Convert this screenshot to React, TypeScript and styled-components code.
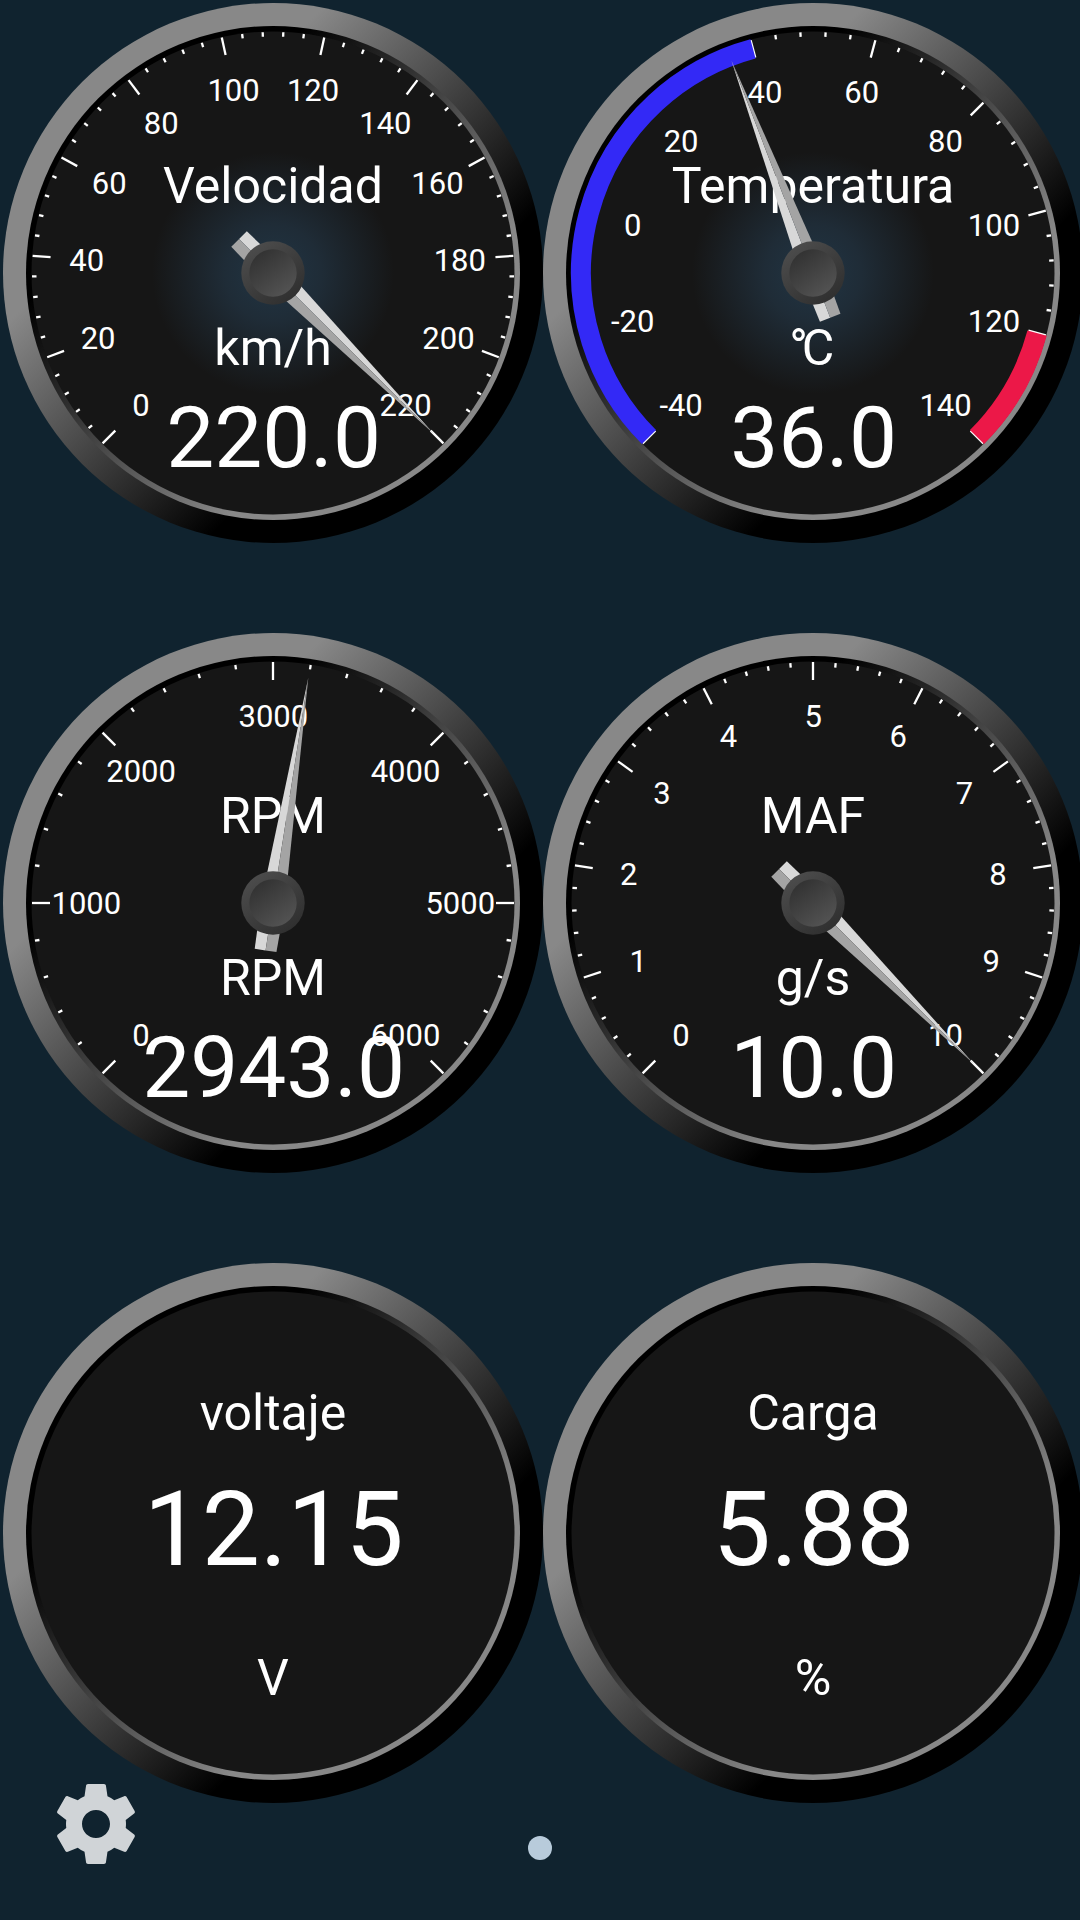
import React from "react";
import styled, { createGlobalStyle } from "styled-components";

const GlobalStyle = createGlobalStyle`
  body {
    margin: 0;
    background: #10232f;
    overflow: hidden;
  }
`;

const Screen = styled.main`
  position: relative;
  box-sizing: border-box;
  width: 1080px;
  height: 1920px;
  padding: 3px 0 0 3px;
  overflow: hidden;
  background: #10232f;
  font-family: Roboto, "Noto Sans", sans-serif;
`;

const GaugeGrid = styled.section`
  display: grid;
  grid-template-columns: repeat(2, 540px);
  grid-auto-rows: 540px;
  row-gap: 90px;
`;

const Dial = styled.svg`
  display: block;
  width: 540px;
  height: 540px;
`;

const DialText = styled.text<{ $size: number; $tracking?: number }>`
  fill: #fff;
  font-family: Roboto, "Noto Sans", sans-serif;
  font-size: ${(p) => p.$size}px;
  letter-spacing: ${(p) => p.$tracking ?? 0}px;
  text-anchor: middle;
`;

const SettingsButton = styled.button`
  position: absolute;
  left: 48px;
  top: 1776px;
  width: 96px;
  height: 96px;
  padding: 0;
  border: 0;
  background: none;
  color: #d0d4d7;

  svg {
    display: block;
    width: 96px;
    height: 96px;
  }
`;

const PageDot = styled.span`
  position: absolute;
  left: 528px;
  top: 1836px;
  width: 24px;
  height: 24px;
  border-radius: 50%;
  background: #b8cbdb;
`;

type Band = { from: number; to: number; color: string };

type Scale = {
  min: number;
  max: number;
  step: number;
  needle: number;
  glow?: boolean;
  bands?: Band[];
};

type GaugeData = {
  title: string;
  unit: string;
  unitTracking?: number;
  value: string;
  scale?: Scale;
};

const GAUGES: GaugeData[] = [
  {
    title: "Velocidad",
    unit: "km/h",
    value: "220.0",
    scale: { min: 0, max: 220, step: 20, needle: 220, glow: true },
  },
  {
    title: "Temperatura",
    unit: "°C",
    unitTracking: -6,
    value: "36.0",
    scale: {
      min: -40,
      max: 140,
      step: 20,
      needle: 36,
      glow: true,
      bands: [
        { from: -40, to: 40, color: "#3329f6" },
        { from: 120, to: 140, color: "#ec1848" },
      ],
    },
  },
  {
    title: "RPM",
    unit: "RPM",
    value: "2943.0",
    scale: { min: 0, max: 6000, step: 1000, needle: 3198 },
  },
  {
    title: "MAF",
    unit: "g/s",
    value: "10.0",
    scale: { min: 0, max: 10, step: 1, needle: 10 },
  },
  { title: "voltaje", unit: "V", value: "12.15" },
  { title: "Carga", unit: "%", value: "5.88" },
];

const SUBDIVISIONS = 5;
const TICK_OUTER = 241;
const LABEL_RADIUS = 187;

const angleOf = (v: number, s: Scale) =>
  -135 + ((v - s.min) / (s.max - s.min)) * 270;

const polar = (deg: number, r: number): [number, number] => {
  const a = (deg * Math.PI) / 180;
  return [Math.sin(a) * r, -Math.cos(a) * r];
};

function Bezel() {
  return (
    <>
      <circle r="270" fill="url(#rimOuter)" />
      <circle r="247" fill="url(#rimInner)" />
      <circle r="241.5" fill="#161616" />
    </>
  );
}

function Ticks({ scale }: { scale: Scale }) {
  const majors = Math.round((scale.max - scale.min) / scale.step);
  const total = majors * SUBDIVISIONS;
  return (
    <g stroke="#fff">
      {Array.from({ length: total + 1 }, (_, i) => {
        const major = i % SUBDIVISIONS === 0;
        const deg = -135 + (i / total) * 270;
        const [x1, y1] = polar(deg, TICK_OUTER);
        const [x2, y2] = polar(deg, major ? 223 : 236.5);
        return (
          <line key={i} x1={x1} y1={y1} x2={x2} y2={y2} strokeWidth={2.3} />
        );
      })}
    </g>
  );
}

function Labels({ scale }: { scale: Scale }) {
  const count = Math.round((scale.max - scale.min) / scale.step) + 1;
  return (
    <>
      {Array.from({ length: count }, (_, i) => {
        const v = scale.min + i * scale.step;
        const [x, y] = polar(angleOf(v, scale), LABEL_RADIUS);
        // A lone "1" has narrow ink, so it sits a little further right.
        const nudge = v === 1 ? 3 : 0.3;
        return (
          <DialText key={v} $size={31} x={x + nudge} y={y + 11.1}>
            {v}
          </DialText>
        );
      })}
    </>
  );
}

function BandArc({ band, scale }: { band: Band; scale: Scale }) {
  const [x1, y1] = polar(angleOf(band.from, scale), 232);
  const [x2, y2] = polar(angleOf(band.to, scale), 232);
  return (
    <path
      d={`M${x1} ${y1}A232 232 0 0 1 ${x2} ${y2}`}
      fill="none"
      stroke={band.color}
      strokeWidth={20}
    />
  );
}

function Needle({ angle }: { angle: number }) {
  return (
    <>
      <g transform={`rotate(${angle})`}>
        <path d="M0 -228L-12 0L-11 48H0Z" fill="#d8d8d8" />
        <path d="M0 -228L12 0L11 48H0Z" fill="#a4a4a4" />
      </g>
      <circle r="31.7" fill="url(#hubOuter)" />
      <circle r="23.7" fill="url(#hubInner)" />
    </>
  );
}

function Gauge({ title, unit, unitTracking = 0, value, scale }: GaugeData) {
  return (
    <Dial viewBox="-270 -270 540 540">
      <Bezel />
      {scale ? (
        <>
          {scale.glow && <circle r="121" fill="url(#glow)" />}
          <Ticks scale={scale} />
          {scale.bands?.map((b) => (
            <BandArc key={b.from} band={b} scale={scale} />
          ))}
          <Labels scale={scale} />
          <DialText $size={50} y={-70.5}>{title}</DialText>
          <DialText $size={50} $tracking={unitTracking} x={unitTracking * 0.7} y={92}>
            {unit}
          </DialText>
          <DialText $size={85.5} x={0.6} y={193.5}>{value}</DialText>
          <Needle angle={angleOf(scale.needle, scale)} />
        </>
      ) : (
        <>
          <DialText $size={50} y={-103}>{title}</DialText>
          <DialText $size={103.5} x={0.6} y={32}>{value}</DialText>
          <DialText $size={50} y={161.5}>{unit}</DialText>
        </>
      )}
    </Dial>
  );
}

const Paints = styled.svg`
  position: absolute;
  width: 0;
  height: 0;
`;

function SharedPaints() {
  return (
    <Paints aria-hidden="true">
      <defs>
        <linearGradient id="rimOuter" gradientUnits="userSpaceOnUse" x1="-108" y1="-108" x2="100" y2="100">
          <stop offset="0" stopColor="#888" />
          <stop offset="1" stopColor="#000" />
        </linearGradient>
        <linearGradient id="rimInner" gradientUnits="userSpaceOnUse" x1="-108" y1="-108" x2="100" y2="100">
          <stop offset="0" stopColor="#000" />
          <stop offset="1" stopColor="#888" />
        </linearGradient>
        <linearGradient id="hubOuter" x1="0.2" y1="0.1" x2="0.8" y2="0.9">
          <stop offset="0" stopColor="#4b4b4b" />
          <stop offset="1" stopColor="#303030" />
        </linearGradient>
        <linearGradient id="hubInner" x1="0.2" y1="0.1" x2="0.8" y2="0.9">
          <stop offset="0" stopColor="#333" />
          <stop offset="1" stopColor="#525252" />
        </linearGradient>
        <radialGradient id="glow">
          <stop offset="0" stopColor="#213544" />
          <stop offset="0.4" stopColor="#1f2c37" />
          <stop offset="1" stopColor="#161616" />
        </radialGradient>
      </defs>
    </Paints>
  );
}

export default function App() {
  return (
    <>
      <GlobalStyle />
      <Screen>
        <SharedPaints />
        <GaugeGrid>
          {GAUGES.map((g) => (
            <Gauge key={g.title} {...g} />
          ))}
        </GaugeGrid>
        <SettingsButton aria-label="Ajustes">
          <svg viewBox="0 0 24 24" fill="currentColor">
            <path d="M19.43 12.98c.04-.32.07-.64.07-.98s-.03-.66-.07-.98l2.11-1.65c.19-.15.24-.42.12-.64l-2-3.46c-.12-.22-.39-.3-.61-.22l-2.49 1c-.52-.4-1.08-.73-1.69-.98l-.38-2.65C14.46 2.18 14.25 2 14 2h-4c-.25 0-.46.18-.49.42l-.38 2.65c-.61.25-1.17.59-1.69.98l-2.49-1c-.23-.09-.49 0-.61.22l-2 3.46c-.13.22-.07.49.12.64l2.11 1.65c-.04.32-.07.65-.07.98s.03.66.07.98l-2.11 1.65c-.19.15-.24.42-.12.64l2 3.46c.12.22.39.3.61.22l2.49-1c.52.4 1.08.73 1.69.98l.38 2.65c.03.24.24.42.49.42h4c.25 0 .46-.18.49-.42l.38-2.65c.61-.25 1.17-.59 1.69-.98l2.49 1c.23.09.49 0 .61-.22l2-3.46c.12-.22.07-.49-.12-.64l-2.11-1.65zM12 15.5c-1.93 0-3.5-1.57-3.5-3.5s1.57-3.5 3.5-3.5 3.5 1.57 3.5 3.5-1.57 3.5-3.5 3.5z" />
          </svg>
        </SettingsButton>
        <PageDot />
      </Screen>
    </>
  );
}
